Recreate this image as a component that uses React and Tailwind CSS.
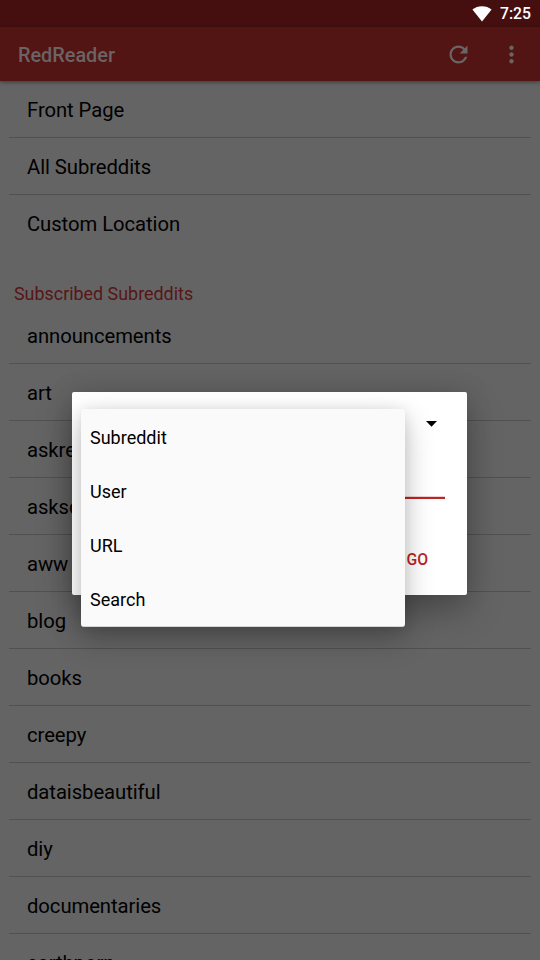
const places = ['Front Page', 'All Subreddits', 'Custom Location'];
const subreddits = [
  'announcements', 'art', 'askreddit', 'askscience', 'aww', 'blog', 'books',
  'creepy', 'dataisbeautiful', 'diy', 'documentaries', 'earthporn',
];
const locationTypes = ['Subreddit', 'User', 'URL', 'Search'];

function StatusBar() {
  return (
    <div className="flex h-[27px] shrink-0 items-center justify-end gap-2 bg-[#460f0f] pr-[9px] text-white">
      <svg className="h-[16px] w-[20px]" viewBox="0 0 20 16" fill="currentColor">
        <path d="M10 15.6 0.4 3.6C3 1.5 6.3 0.3 10 0.3s7 1.2 9.6 3.3z" />
      </svg>
      <span className="text-[15.75px] leading-[27px] font-medium">7:25</span>
    </div>
  );
}

function AppBar() {
  return (
    <div className="relative flex h-[54px] shrink-0 items-center bg-[#531414] pr-[15px] pl-[18px] text-[#6a6464] shadow-[0_1px_4px_rgba(0,0,0,0.45)]">
      <h1 className="grow pt-[3px] text-[19.85px] leading-[30px] font-medium text-[#6a6464]">RedReader</h1>
      <svg className="mr-[26px] h-[27px] w-[27px]" viewBox="0 0 24 24" fill="currentColor">
        <path d="M17.65 6.35C16.2 4.9 14.21 4 12 4c-4.42 0-7.99 3.58-7.99 8s3.57 8 7.99 8c3.73 0 6.84-2.55 7.73-6h-2.08c-.82 2.33-3.04 4-5.65 4-3.31 0-6-2.69-6-6s2.69-6 6-6c1.66 0 3.14.69 4.22 1.78L13 11h7V4z" />
      </svg>
      <svg className="h-[27px] w-[27px]" viewBox="0 0 24 24" fill="currentColor">
        <path d="M12 8c1.1 0 2-.9 2-2s-.9-2-2-2-2 .9-2 2 .9 2 2 2zm0 2c-1.1 0-2 .9-2 2s.9 2 2 2 2-.9 2-2-.9-2-2-2zm0 6c-1.1 0-2 .9-2 2s.9 2 2 2 2-.9 2-2-.9-2-2-2z" />
      </svg>
    </div>
  );
}

function List({ items }) {
  return (
    <ul className="px-[9px]">
      {items.map((item) => (
        <li key={item} className="flex h-[57px] items-center border-b border-[#515151] pt-[2px] pl-[18px] text-[20.25px] tracking-[-0.06px] text-black last:border-transparent">
          {item}
        </li>
      ))}
    </ul>
  );
}

function LocationDialog() {
  return (
    <div className="absolute top-[392px] left-[72px] flex h-[203px] w-[395px] flex-col items-end rounded-[2px] bg-white pr-[22px] shadow-[0_16px_36px_rgba(0,0,0,0.26),0_0_28px_rgba(0,0,0,0.12)]">
      <svg className="mt-[29px] mr-[8px] h-[6px] w-[11px]" viewBox="0 0 11 6">
        <path d="M0 0h11L5.5 5.8z" fill="#000" />
      </svg>
      <div className="mt-[69px] h-[3px] w-[350px] border-t border-[#f3cfcf] bg-[#b92626]" />
      <button className="mt-[49px] mr-[17px] text-[15.75px] leading-[24px] font-medium text-[#b92626]">GO</button>
    </div>
  );
}

function LocationMenu() {
  return (
    <ul className="absolute top-[409px] left-[81px] h-[218px] w-[324px] rounded-[3px] border-b border-[#d5d5d5] bg-[#fafafa] shadow-[0_12px_30px_rgba(0,0,0,0.24),0_1px_14px_rgba(0,0,0,0.1)]">
      {locationTypes.map((type) => (
        <li key={type} className="flex h-[54px] items-center pt-[2px] pl-[9px] text-[18px] text-black">{type}</li>
      ))}
    </ul>
  );
}

export default function App() {
  return (
    <div className="relative flex h-[960px] w-[540px] flex-col overflow-hidden bg-[#646464] font-['Roboto',sans-serif]">
      <StatusBar />
      <AppBar />
      <main className="min-h-0 grow overflow-hidden">
        <List items={places} />
        <h2 className="flex h-[55px] items-end pl-[14px] text-[17.9px] leading-[27px] text-[#561616]">Subscribed Subreddits</h2>
        <List items={subreddits} />
      </main>
      <LocationDialog />
      <LocationMenu />
    </div>
  );
}
